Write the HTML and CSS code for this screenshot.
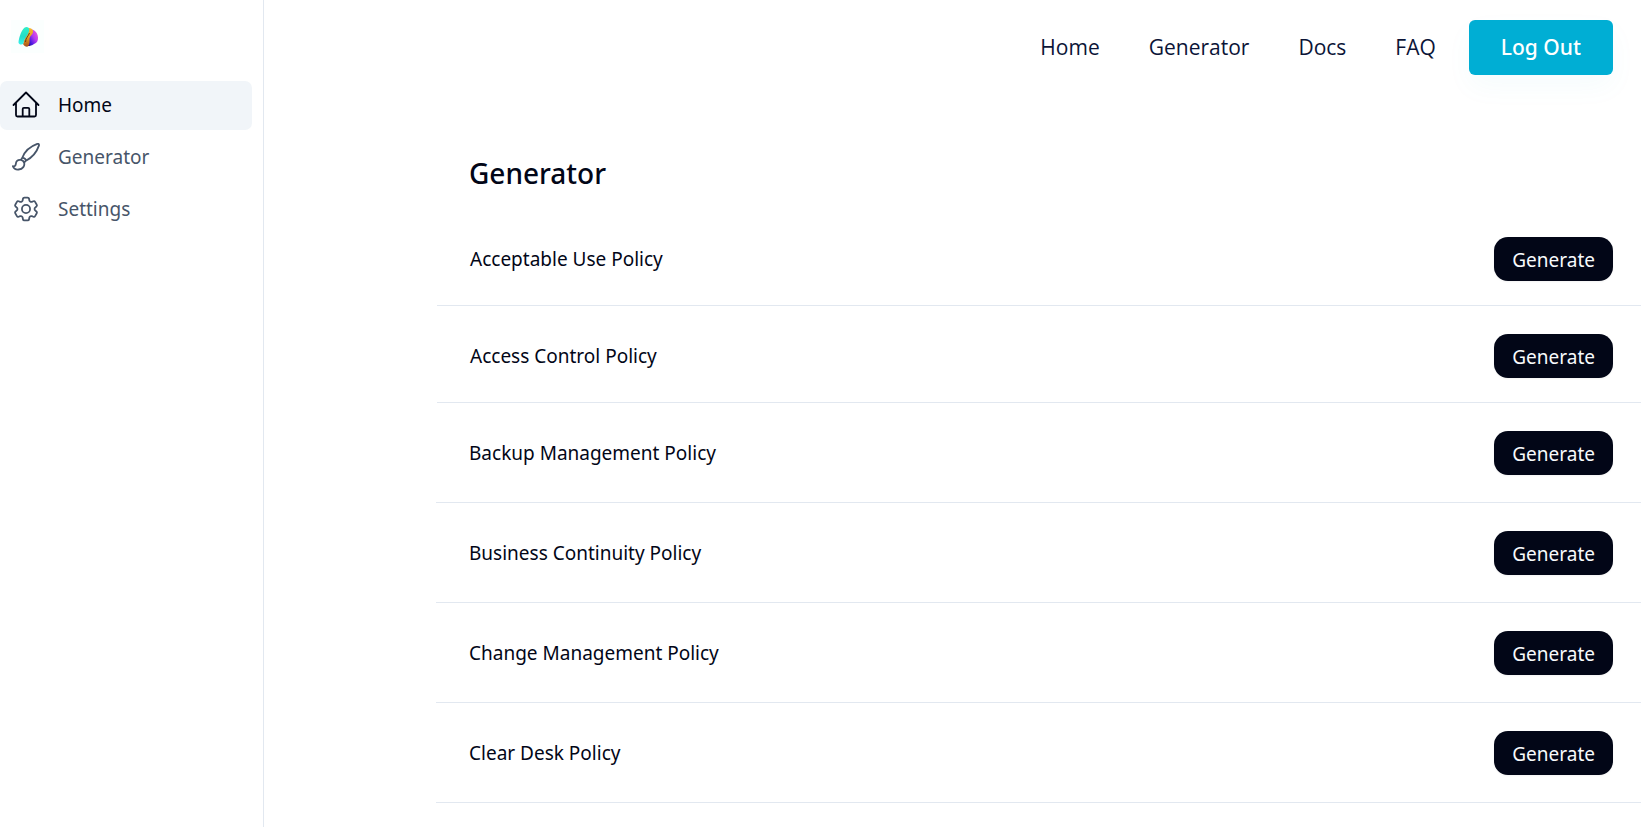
FILE: index.html
```html
<!DOCTYPE html>
<html lang="en">
<head>
<meta charset="utf-8">
<meta name="viewport" content="width=device-width, initial-scale=1">
<title>Generator</title>
<link rel="stylesheet" href="styles.css">
</head>
<body>
<div class="app">
  <aside class="sidebar">
    <a class="brand" href="#" aria-label="Dashboard">
      <svg class="brand-mark" viewBox="0 0 33 33" aria-hidden="true">
        <defs>
          <linearGradient id="teal" x1="0" y1="0" x2="0" y2="1"><stop offset="0" stop-color="#2ef0c8"/><stop offset=".55" stop-color="#23dcc8"/><stop offset="1" stop-color="#38f4f0"/></linearGradient>
          <linearGradient id="gold" x1="0" y1="0" x2="0" y2="1"><stop offset="0" stop-color="#f2b632"/><stop offset=".5" stop-color="#e9a11c"/><stop offset="1" stop-color="#a8501c"/></linearGradient>
          <linearGradient id="violet" x1="1" y1="0" x2="0" y2="1"><stop offset="0" stop-color="#ff62d6"/><stop offset=".45" stop-color="#b23af0"/><stop offset=".75" stop-color="#4a18e0"/><stop offset="1" stop-color="#20106a"/></linearGradient>
        </defs>
        <rect width="33" height="33" fill="#fbfffe"/>
        <path fill="url(#violet)" d="M21 9.500c4 1 6 5 6 8.500 0 3-1 5-4 6-2 1.500-4 2-6 2l0-8z"/>
        <path fill="url(#gold)" d="M17 8c3 0 5.500 1.500 5 4-.5 3-3.500 4-3.500 7 0 2 .5 5-1.500 7.500-2 .5-4-.5-5-2.500l3-10z"/>
        <path fill="url(#teal)" d="M15.500 7c3 .2 3.500 3 1.500 7-1.500 3-4 5-4.500 9.500-1.500 2-5.500 1-5-1.500.5-4 3-14.500 8-15z"/>
        <path fill="none" stroke="#4c2818" stroke-width=".8" d="M18.500 13c-1 3-4 5-4 9"/>
      </svg>
    </a>
    <nav class="side-nav" aria-label="Sidebar">
      <a class="side-link is-active" href="#">
        <svg class="side-icon" viewBox="0 0 28 28" aria-hidden="true"><path d="M1.500 14 14 1.500 26.500 14M4 11.500V24a1.500 1.500 0 0 0 1.500 1.500h17A1.500 1.500 0 0 0 24 24V11.500M10.700 25.500V18a1.200 1.200 0 0 1 1.200-1.200h4.200a1.200 1.200 0 0 1 1.200 1.200v7.500"/></svg>
        <span>Home</span>
      </a>
      <a class="side-link" href="#">
        <svg class="side-icon" viewBox="0 0 28 28" aria-hidden="true"><path d="M10.300 14.700C12.500 9 18 3.500 25.300.9c1.300-.4 2 .5 1.600 1.700-2.400 7.200-7.500 12.200-12.900 15.100M10.300 14.700c2 .3 3.400 1.400 3.700 3M10.300 14.700l-1.500 2.200M14 17.700l-1.900 1.900M8.800 16.900c-3.500-.4-4.800 1.700-5 4.200-.2 1.700-1.500 2.600-3 2 .9 2.200 3 3.700 5.800 3.400 4.300-.3 6.400-3.700 5.500-6.900-.5-1.500-1.800-2.500-3.300-2.700z"/></svg>
        <span>Generator</span>
      </a>
      <a class="side-link" href="#">
        <svg class="side-icon" viewBox="1 1 22 22" aria-hidden="true"><path stroke-width="1.4" d="M9.594 3.940c.09-.542.56-.94 1.110-.94h2.593c.55 0 1.020.398 1.110.94l.213 1.281c.063.374.313.686.645.87.074.04.147.083.22.127.325.196.72.257 1.075.124l1.217-.456a1.125 1.125 0 0 1 1.370.49l1.296 2.247a1.125 1.125 0 0 1-.26 1.431l-1.003.827c-.293.241-.438.613-.43.992a7.723 7.723 0 0 1 0 .255c-.008.378.137.75.43.991l1.004.827c.424.35.534.955.26 1.430l-1.298 2.247a1.125 1.125 0 0 1-1.369.491l-1.217-.456c-.355-.133-.75-.072-1.076.124a6.470 6.470 0 0 1-.22.128c-.331.183-.581.495-.644.869l-.213 1.281c-.09.543-.56.940-1.110.940h-2.594c-.55 0-1.019-.398-1.110-.940l-.213-1.281c-.062-.374-.312-.686-.644-.870a6.520 6.520 0 0 1-.22-.127c-.325-.196-.72-.257-1.076-.124l-1.217.456a1.125 1.125 0 0 1-1.369-.490l-1.297-2.247a1.125 1.125 0 0 1 .26-1.431l1.004-.827c.292-.240.437-.613.430-.991a6.932 6.932 0 0 1 0-.255c.007-.380-.138-.751-.430-.992l-1.004-.827a1.125 1.125 0 0 1-.26-1.430l1.297-2.247a1.125 1.125 0 0 1 1.370-.491l1.216.456c.356.133.751.072 1.076-.124.072-.044.146-.086.220-.128.332-.183.582-.495.644-.869z"/><circle cx="12" cy="12" r="3.200" stroke-width="1.400"/></svg>
        <span>Settings</span>
      </a>
    </nav>
  </aside>

  <div class="page">
    <header class="topbar">
      <nav class="top-nav" aria-label="Main">
        <a href="#">Home</a>
        <a href="#">Generator</a>
        <a href="#">Docs</a>
        <a href="#">FAQ</a>
      </nav>
      <button class="logout" type="button">Log Out</button>
    </header>
    <main class="content">
      <h1 class="title">Generator</h1>
      <ul class="policies">
        <li class="policy policy-first"><span>Acceptable Use Policy</span><button class="generate" type="button">Generate</button></li>
        <li class="policy policy-compact"><span>Access Control Policy</span><button class="generate" type="button">Generate</button></li>
        <li class="policy"><span>Backup Management Policy</span><button class="generate" type="button">Generate</button></li>
        <li class="policy"><span>Business Continuity Policy</span><button class="generate" type="button">Generate</button></li>
        <li class="policy"><span>Change Management Policy</span><button class="generate" type="button">Generate</button></li>
        <li class="policy"><span>Clear Desk Policy</span><button class="generate" type="button">Generate</button></li>
      </ul>
    </main>
  </div>
</div>
</body>
</html>
```

FILE: styles.css
```css
* {
  box-sizing: border-box;
}

body {
  margin: 0;
  background: #fff;
  color: #020617;
  font-family: "Noto Sans", "Open Sans", sans-serif;
  font-size: 19px;
  line-height: 28px;
}

a {
  color: inherit;
  text-decoration: none;
}

button {
  border: 0;
  font: inherit;
  cursor: pointer;
}

.app {
  display: flex;
  min-height: 100vh;
}

.sidebar {
  flex: none;
  width: 264px;
  padding: 20px 11px 20px 0;
  border-right: 1px solid #e2e8f0;
}

.brand {
  display: block;
  margin: 0 0 28px 11px;
}

.brand-mark {
  display: block;
  width: 33px;
  height: 33px;
}

.side-nav {
  display: grid;
  gap: 3px;
}

.side-link {
  display: flex;
  align-items: center;
  gap: 18px;
  height: 49px;
  padding: 0 12px 2px;
  border-radius: 7px;
  color: #475569;
}

.side-link.is-active {
  background: #f1f5f9;
  color: #020617;
}

.side-icon {
  flex: none;
  width: 28px;
  height: 28px;
  fill: none;
  stroke: currentColor;
  stroke-width: 1.8;
  stroke-linecap: round;
  stroke-linejoin: round;
}

.page {
  flex: 1;
  min-width: 0;
}

.topbar {
  display: flex;
  justify-content: flex-end;
  align-items: center;
  gap: 33px;
  padding: 20px 28px 0;
  font-size: 21px;
}

.top-nav {
  display: flex;
  gap: 49px;
  padding-bottom: 2px;
  color: #0b1437;
  font-family: "Open Sans", "Noto Sans", sans-serif;
}

.logout {
  height: 55px;
  padding: 0 32px 2px;
  border-radius: 6px;
  background: #00aed4;
  box-shadow: 0 12px 28px rgba(0, 174, 212, 0.04);
  color: #fff;
  font-weight: 500;
}

.content {
  padding: 78px 0 0 172px;
}

.title {
  margin: 0 0 44px;
  padding-left: 33px;
  font-size: 28px;
  font-weight: 500;
  line-height: 40px;
}

.policies {
  margin: 0;
  padding: 0;
  list-style: none;
}

.policy {
  display: flex;
  justify-content: space-between;
  align-items: center;
  padding: 28px 28px 27px 33px;
  border-bottom: 1px solid #e2e8f0;
}

.policy-first,
.policy-compact {
  margin-left: 1px;
  padding-bottom: 24px;
}

.policy-first {
  padding-top: 0;
}

.generate {
  height: 44px;
  padding: 2px 18px 0;
  border-radius: 14px;
  background: #020617;
  box-shadow: 0 1px 2px rgba(0, 0, 0, 0.05);
  color: #f8fafc;
}
```
